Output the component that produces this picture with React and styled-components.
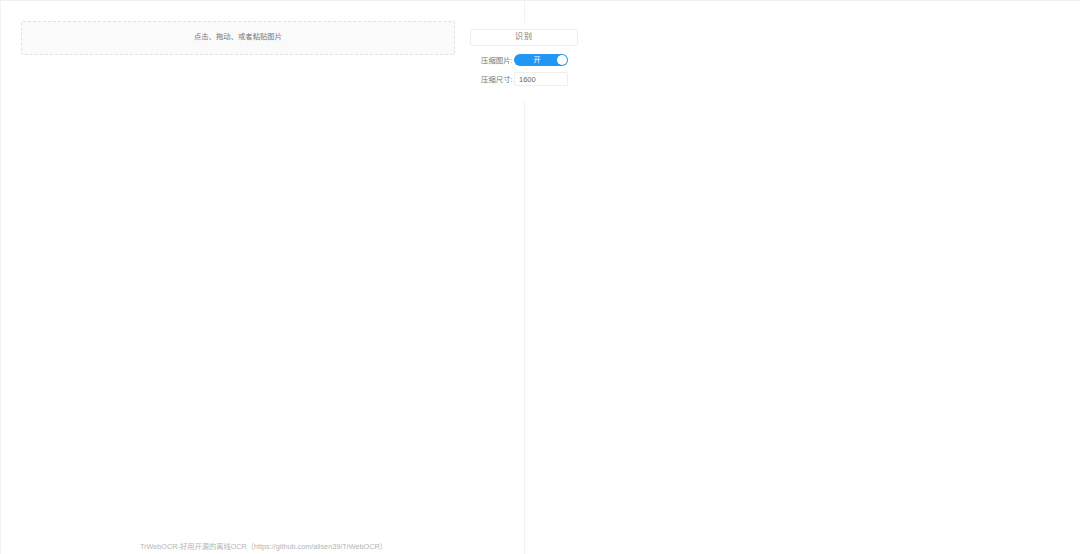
import React from "react";
import styled, { createGlobalStyle } from "styled-components";

const GlobalStyle = createGlobalStyle`
  html, body {
    margin: 0;
    padding: 0;
    height: 100%;
    background: #fff;
    font-family: "Liberation Sans", "Noto Sans CJK SC", sans-serif;
  }
  #root {
    height: 100%;
  }
`;

const Page = styled.div`
  position: relative;
  display: grid;
  grid-template-columns: 525px 1fr;
  height: 554px;
  box-sizing: border-box;
  border-top: 1px solid #f0f0f0;
  overflow: hidden;
`;

const LeftPane = styled.div`
  display: flex;
  flex-direction: column;
  justify-content: space-between;
  padding: 20px 0 0 21px;
  border-left: 1px solid #f2f2f2;
  border-right: 1px solid #f2f2f2;
`;

const UploadBox = styled.div`
  width: 434px;
  height: 34px;
  box-sizing: border-box;
  margin-left: -1px;
  padding-bottom: 6px;
  display: flex;
  align-items: center;
  justify-content: center;
  background: #fafafa;
  border: 1px dashed #e2e2e2;
  border-radius: 2px;
  font-size: 7.35px;
  color: #777;
`;

const Footer = styled.div`
  margin-left: 118px;
  height: 15px;
  line-height: 15px;
  font-size: 7.25px;
  color: #b4b4b4;
  white-space: nowrap;
`;

const RightPane = styled.div``;

const Controls = styled.div`
  position: absolute;
  left: 470px;
  top: 22px;
  width: 108px;
  padding: 6px 0 16px;
  display: flex;
  flex-direction: column;
  align-items: stretch;
  background: #fff;
`;

const RecognizeButton = styled.button`
  height: 17px;
  padding: 0 0 4px;
  box-sizing: border-box;
  background: #fff;
  border: 1px solid #eee;
  border-radius: 2px;
  font-family: inherit;
  font-size: 8px;
  letter-spacing: 1px;
  color: #777;
`;

const Row = styled.div`
  display: flex;
  align-items: center;
  height: 14px;
  margin: ${(props) => props.$top}px 0 0 11px;
`;

const Label = styled.span`
  width: 31px;
  margin-top: -2px;
  font-size: 7.4px;
  color: #777;
  white-space: nowrap;
`;

const Toggle = styled.div`
  position: relative;
  width: 54px;
  height: 12px;
  margin-left: 2px;
  padding: 0 8px 2px 0;
  box-sizing: border-box;
  display: flex;
  align-items: center;
  justify-content: center;
  background: #2196f3;
  border-radius: 6px;
  font-size: 7px;
  color: #fff;
`;

const Knob = styled.span`
  position: absolute;
  right: 1px;
  top: 1px;
  width: 10px;
  height: 10px;
  border-radius: 50%;
  background: #fff;
`;

const SizeInput = styled.div`
  width: 54px;
  height: 14px;
  margin-left: 2px;
  padding-left: 4px;
  box-sizing: border-box;
  display: flex;
  align-items: center;
  background: #fff;
  border: 1px solid #eee;
  border-radius: 2px;
  font-size: 7.5px;
  color: #666;
`;

const App = () => {
  return (
    <>
      <GlobalStyle />
      <Page>
        <LeftPane>
          <UploadBox>点击、拖动、或者粘贴图片</UploadBox>
          <Footer>TrWebOCR-好用开源的离线OCR（https://github.com/alisen39/TrWebOCR）</Footer>
        </LeftPane>
        <RightPane />
        <Controls>
          <RecognizeButton>识别</RecognizeButton>
          <Row $top={7}>
            <Label>压缩图片:</Label>
            <Toggle>
              开
              <Knob />
            </Toggle>
          </Row>
          <Row $top={5}>
            <Label>压缩尺寸:</Label>
            <SizeInput>1600</SizeInput>
          </Row>
        </Controls>
      </Page>
    </>
  );
};

export default App;
